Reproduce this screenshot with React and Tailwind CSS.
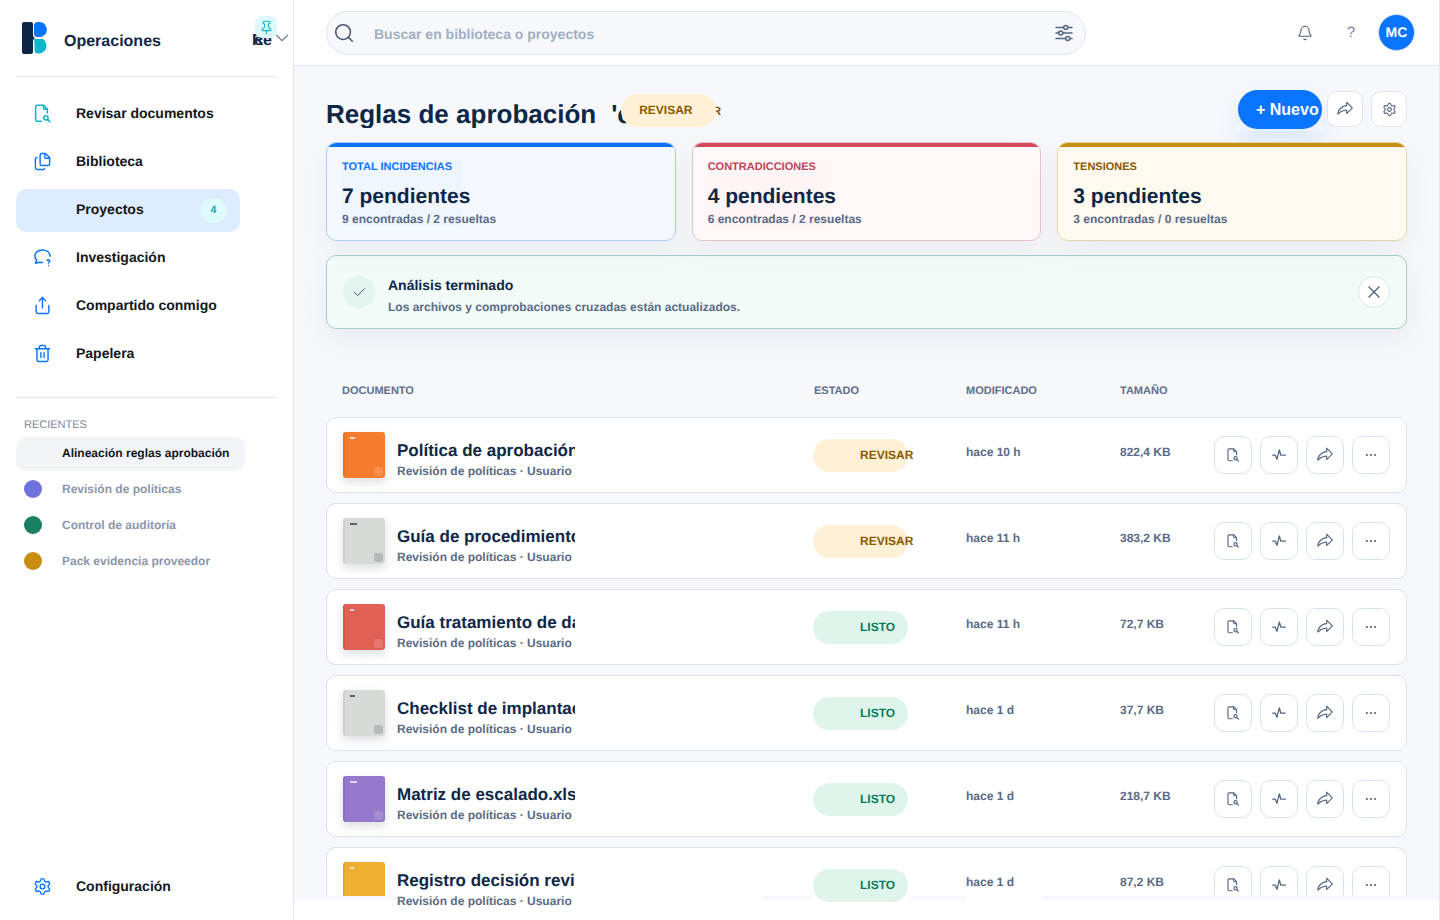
import { Bell, Check, ChevronDown, Ellipsis, Files, Pin, Search, Settings, Share, Trash2, X } from "lucide-react";
import { PiShareFat } from "react-icons/pi";

const ink = "text-[#0f2747]";

const Logo = () => (
  <svg width="25" height="32" viewBox="0 0 25 32" className="shrink-0">
    <path d="M2 0h7a2 2 0 0 1 2 2v11c0 1.500 1 2.500 2 3-1 .5-2 1.500-2 3v11a2 2 0 0 1-2 2H2a2 2 0 0 1-2-2V2a2 2 0 0 1 2-2z" fill="#0c2548" />
    <path d="M12 4a4 4 0 0 1 4-4h1a7.500 7.500 0 0 1 4 14c-.5.500-1 .700-1.500.900H15c-2 0-3-1.500-3-3.500z" fill="#0a74ff" />
    <path d="M12.500 17h8.500c2 1.500 3.500 4 3.500 7a7.500 7.500 0 0 1-7.500 7.500h-1a3.500 3.500 0 0 1-3.500-3.500v-6c0-2-.5-4-.5-5z" fill="#0fb5cb" />
  </svg>
);

const DocSearch = ({ className, width = 1.600 }) => (
  <svg viewBox="0 0 20 20" fill="none" stroke="currentColor" strokeWidth={width} strokeLinecap="round" strokeLinejoin="round" className={className}>
    <path d="M9 18.200H4.500a1.700 1.700 0 0 1-1.700-1.700V3a1.700 1.700 0 0 1 1.700-1.700h6.700l3.900 4v4.200" />
    <path d="M11 1.500v2.700a1.200 1.200 0 0 0 1.200 1.200h2.800" />
    <circle cx="13.600" cy="14.600" r="2.300" />
    <path d="M15.400 16.400l2.500 2.300" />
  </svg>
);

const ChatHelp = ({ className }) => (
  <svg viewBox="0 0 20 20" fill="none" stroke="currentColor" strokeWidth="1.600" strokeLinecap="round" strokeLinejoin="round" className={className}>
    <path d="M18 8.500C17.600 4.500 14.300 2 10 2 5.400 2 2 4.800 2 8.500c0 1.700.7 3.200 1.900 4.400L2.500 16l4.200-1.100c1 .3 2 .4 3.300.4" />
    <path d="M15 13.200c.3-1 2.700-1 2.700.5 0 1-1.300 1.100-1.300 2" />
    <path d="M16.400 18.300v.1" />
  </svg>
);

const Pulse = () => (
  <svg width="16" height="16" viewBox="0 0 14 14" fill="none" stroke="#55657f" strokeWidth="1.100" strokeLinecap="round" strokeLinejoin="round">
    <path d="M1.500 7.200h2.300l1.400 3.600L7.300 2.500l1.300 4.700h3.900" />
  </svg>
);

const Sliders = () => (
  <svg width="20" height="20" viewBox="0 0 20 20" fill="none" stroke="#55657f" strokeWidth="1.500" strokeLinecap="round">
    <path d="M2 4.500h7.500M14 4.500h4M2 10h2.500M9 10h9M2 15.500h9.500M16 15.500h2" />
    <circle cx="11.700" cy="4.500" r="2" />
    <circle cx="6.700" cy="10" r="2" />
    <circle cx="13.700" cy="15.500" r="2" />
  </svg>
);

const navItems = [
  { label: "Revisar documentos", icon: <DocSearch className="w-[19px] h-[19px] text-[#0fb5cb]" /> },
  { label: "Biblioteca", icon: <Files size={19} strokeWidth={1.8} className="text-[#0a74ff]" /> },
  { label: "Proyectos", active: true, badge: "4" },
  { label: "Investigación", icon: <ChatHelp className="w-[19px] h-[19px] text-[#0a74ff]" /> },
  { label: "Compartido conmigo", icon: <Share size={19} strokeWidth={1.8} className="text-[#0a74ff]" /> },
  { label: "Papelera", icon: <Trash2 size={19} strokeWidth={1.8} className="text-[#0a74ff]" /> },
];

const recents = [
  { label: "Revisión de políticas", dot: "bg-[#6f72dc]" },
  { label: "Control de auditoría", dot: "bg-[#1a8063]" },
  { label: "Pack evidencia proveedor", dot: "bg-[#c98d12]" },
];

const stats = [
  { label: "Total incidencias", value: "7 pendientes", sub: "9 encontradas / 2 resueltas", box: "border-[#a9cdf5] bg-[#f5f9ff]", bar: "bg-[#0a74ff]", tint: "bg-[#eff6ff]", color: "text-[#0a74ff]" },
  { label: "Contradicciones", value: "4 pendientes", sub: "6 encontradas / 2 resueltas", box: "border-[#e6c3cb] bg-[#fff8f9]", bar: "bg-[#d2495c]", tint: "bg-[#fff4f6]", color: "text-[#c0455a]" },
  { label: "Tensiones", value: "3 pendientes", sub: "3 encontradas / 0 resueltas", box: "border-[#e3d5ac] bg-[#fffaf0]", bar: "bg-[#c98d12]", tint: "bg-[#fffaf0]", color: "text-[#8a5a00]" },
];

const docs = [
  { name: "Política de aprobación.pdf", status: "REVISAR", when: "hace 10 h", size: "822,4 KB", thumb: "bg-[#f57c2e] border-l-[#ea7026]", tag: "bg-white/70 w-[5px]", mark: "bg-white/15" },
  { name: "Guía de procedimientos.docx", status: "REVISAR", when: "hace 11 h", size: "383,2 KB", thumb: "bg-[#d8dad8] border-l-[#cdd0ce]", tag: "bg-[#5a6270] w-[7px]", mark: "bg-[#b6babc]" },
  { name: "Guía tratamiento de datos.pdf", status: "LISTO", when: "hace 11 h", size: "72,7 KB", thumb: "bg-[#e06055] border-l-[#d4564c]", tag: "bg-white/70 w-[4px]", mark: "bg-white/15" },
  { name: "Checklist de implantación.docx", status: "LISTO", when: "hace 1 d", size: "37,7 KB", thumb: "bg-[#d8dad8] border-l-[#cdd0ce]", tag: "bg-[#5a6270] w-[5px]", mark: "bg-[#b6babc]" },
  { name: "Matriz de escalado.xlsx", status: "LISTO", when: "hace 1 d", size: "218,7 KB", thumb: "bg-[#9579cc] border-l-[#8a6ec3]", tag: "bg-white/70 w-[7px]", mark: "bg-white/15" },
  { name: "Registro decisión revisión.pdf", status: "LISTO", when: "hace 1 d", size: "87,2 KB", thumb: "bg-[#eeb030] border-l-[#e3a528]", tag: "bg-white/70 w-[4px]", mark: "bg-white/15", cut: true },
];

const Sidebar = () => (
  <aside className="w-[294px] shrink-0 border-r border-[#e3e7ef] bg-white px-4 flex flex-col h-[920px]">
    <div className="h-[77px] shrink-0 border-b border-[#e3e6ee] w-[261px] flex items-start pt-[22px] relative">
      <div className="ml-[6px]"><Logo /></div>
      <span className={`ml-[17px] mt-[8px] text-[16px] font-semibold ${ink}`}>Operaciones</span>
      <span className={`absolute left-[236px] top-[32px] text-[16px] leading-[18px] font-bold ${ink}`}>R</span>
      <span className={`absolute left-[238px] top-[32px] text-[16px] leading-[18px] font-bold ${ink}`}>ce</span>
      <span className="absolute left-[239px] top-[16px] w-[22px] h-[22px] rounded-[7px] bg-[#dffafc] flex items-center justify-center">
        <Pin size={15} strokeWidth={1.7} className="text-[#0fb5cb]" />
      </span>
      <ChevronDown size={22} strokeWidth={1.2} className="absolute left-[255px] top-[27px] text-[#6b7a90]" />
    </div>
    <nav className="pt-[16px] flex flex-col gap-[5px] w-[224px]">
      {navItems.map((item) => (
        <div key={item.label} className={`h-[43px] rounded-[10px] flex items-center text-[14px] font-semibold text-[#14171c] ${item.active ? "bg-[#ddecff]" : ""}`}>
          <span className="w-[60px] pl-[17px] shrink-0 flex items-center -mt-[3px]">{item.icon}</span>
          <span className="flex-1 -mt-[3px]">{item.label}</span>
          {item.badge && (
            <span className="w-[27px] h-[25px] mr-[13px] rounded-full bg-[#dffafb] flex items-center justify-center text-[10.500px] font-bold text-[#0fa5bb]">{item.badge}</span>
          )}
        </div>
      ))}
    </nav>
    <div className="mt-[21px] w-[261px] border-t border-[#e3e6ee] pt-[20px]">
      <div className="pl-[8px] text-[11px] font-medium text-[#7a869a] leading-[14px]">RECIENTES</div>
      <div className="mt-[5px] w-[229px] h-[34px] rounded-[10px] bg-[#f3f4f8] pl-[46px] pb-[2px] flex items-center text-[12px] font-semibold text-[#14171c]">Alineación reglas aprobación</div>
      <div className="flex flex-col">
        {recents.map((r) => (
          <div key={r.label} className="h-[36px] pl-[8px] flex items-center gap-[20px] text-[12px] font-semibold text-[#8c96a9]">
            <span className={`w-[18px] h-[18px] rounded-full shrink-0 ${r.dot}`} />
            {r.label}
          </div>
        ))}
      </div>
    </div>
    <div className="mt-auto mb-[12px] h-[44px] flex items-center text-[14px] font-semibold text-[#14171c]">
      <span className="w-[60px] pl-[17px] shrink-0"><Settings size={19} strokeWidth={1.8} className="text-[#0a74ff]" /></span>
      Configuración
    </div>
  </aside>
);

const Topbar = () => (
  <header className="h-[66px] shrink-0 bg-white border-b border-[#dfe4ee] px-8 flex items-center">
    <div className="w-[760px] h-[44px] rounded-full bg-[#f6f8fc] border border-[#dfe5f0] flex items-center pl-[6px] pr-[11px]">
      <Search size={22} strokeWidth={1.7} className="text-[#475569]" />
      <span className="ml-[19px] mt-[3px] text-[14px] font-semibold text-[#a3afc2] flex-1">Buscar en biblioteca o proyectos</span>
      <Sliders />
    </div>
    <div className="ml-auto flex items-center mr-[-8px]">
      <Bell size={16} strokeWidth={1.6} className="text-[#4b5a70]" />
      <span className="ml-[34px] mt-[2px] text-[15px] text-[#7a869a]">?</span>
      <span className="ml-[23px] w-[37px] h-[37px] rounded-full bg-[#0a74ff] border border-[#dfe5f0] flex items-center justify-center text-[14px] font-bold text-white">MC</span>
    </div>
  </header>
);

const TitleRow = () => (
  <div className="flex items-start">
    <h1 className={`h-[38px] overflow-hidden text-[26px] font-bold leading-[49px] whitespace-nowrap ${ink}`}>
      Reglas de aprobación<span className="ml-[15px]">'c</span>
    </h1>
    <div className="relative ml-[-11px] pl-[47px] h-[33px] mt-[4px] w-[101px] flex items-center text-[12px] font-semibold text-[#8a5a00]">
      REVISAR
      <span className="absolute left-0 top-0 w-[95px] h-[33px] rounded-full bg-[#fff0d6] pr-[5px] pb-[1px] flex items-center justify-center">REVISAR</span>
    </div>
    <div className="ml-auto flex items-start">
      <div className="w-[87px] h-[41px] pl-[2px] bg-gradient-to-b from-[#f6f8fc] from-70% to-white">
        <button className="h-[39px] w-[84px] rounded-full bg-[#0a74ff] pl-[18px] text-left text-[16px] font-bold text-white whitespace-nowrap shadow-[0_12px_24px_rgba(10,116,255,0.12)]">+ Nuevo</button>
      </div>
      <button className="ml-[4px] mt-[1px] w-[36px] h-[36px] rounded-[10px] bg-white border border-[#dfe5f0] flex items-center justify-center"><PiShareFat size={18} className="text-[#55657f]" /></button>
      <button className="ml-[8px] mt-[1px] w-[36px] h-[36px] rounded-[10px] bg-white border border-[#dfe5f0] flex items-center justify-center"><Settings size={15} strokeWidth={1.7} className="text-[#55657f]" /></button>
    </div>
  </div>
);

const StatCard = ({ s }) => (
  <div className={`h-[99px] rounded-[10px] border overflow-hidden shadow-[0_10px_30px_rgba(15,23,42,0.05)] ${s.box}`}>
    <div className={`h-[4px] ${s.bar}`} />
    <div className={`ml-[15px] mt-[13px] w-[120px] h-[66px] ${s.tint}`}>
      <div className={`text-[11px] font-semibold uppercase whitespace-nowrap leading-[14px] ${s.color}`}>{s.label}</div>
      <div className={`mt-[10px] text-[21px] font-bold leading-[26px] whitespace-nowrap ${ink}`}>{s.value}</div>
      <div className="mt-[1px] text-[12px] font-semibold leading-[16px] whitespace-nowrap text-[#5a6b85]">{s.sub}</div>
    </div>
  </div>
);

const Notice = () => (
  <div className="mt-[14px] h-[74px] rounded-[10px] border border-[#a5cfcf] bg-[#f2fbf8] pl-[16px] pr-[16px] flex items-center shadow-[0_10px_30px_rgba(15,23,42,0.06)]">
    <span className="w-[32px] h-[32px] rounded-full bg-[#e4f5ef] flex items-center justify-center shrink-0"><Check size={15} strokeWidth={1.6} className="text-[#475569]" /></span>
    <div className="ml-[13px] mt-[7px]">
      <div className={`text-[14px] font-bold leading-[18px] ${ink}`}>Análisis terminado</div>
      <div className="mt-[5px] text-[12px] font-semibold leading-[16px] text-[#5a6b85]">Los archivos y comprobaciones cruzadas están actualizados.</div>
    </div>
    <span className="ml-auto w-[32px] h-[32px] rounded-full bg-white border border-[#dfe5f0] flex items-center justify-center"><X size={20} strokeWidth={1.6} className="text-[#55657f]" /></span>
  </div>
);

const ActionButton = ({ children }) => (
  <span className="w-[38px] h-[38px] shrink-0 rounded-[10px] bg-white border border-[#d9e2ef] flex items-center justify-center">{children}</span>
);

const DocRow = ({ d }) => (
  <div className={`bg-white border-[#d9e2ef] ${d.cut ? "h-[49px] rounded-t-[10px] border-x border-t" : "h-[76px] rounded-[10px] border"} pl-[16px] pr-[16px] grid grid-cols-[470px_153px_154px_94px_176px] items-start`}>
    <div className="flex items-start">
      <div className={`mt-[14px] w-[42px] shrink-0 ${d.cut ? "h-[34px] overflow-hidden" : "h-[46px]"}`}>
        <div className={`relative h-[46px] rounded-[3px] border-l-[2px] shadow-[0_4px_10px_rgba(15,23,42,0.14)] ${d.thumb}`}>
          <span className={`absolute left-[5px] top-[5px] h-[2px] ${d.tag}`} />
          <span className={`absolute right-[2px] bottom-[2px] w-[9px] h-[9px] rounded-[2px] ${d.mark}`} />
        </div>
      </div>
      <div className="ml-[12px] mt-[22px] w-[178px]">
        <div className={`overflow-hidden whitespace-nowrap text-[17px] font-bold leading-[22px] ${ink}`}>{d.name}</div>
        <div className="mt-[1px] whitespace-nowrap text-[12px] font-semibold leading-[16px] text-[#5a6b85]">Revisión de políticas · Usuario</div>
      </div>
    </div>
    <div className={`mt-[21px] w-[95px] h-[33px] rounded-full pl-[47px] pb-[2px] flex items-center whitespace-nowrap text-[12px] font-bold ${d.status === "LISTO" ? "bg-[#dff5ec] text-[#0f7a57]" : "bg-[#fff0d6] text-[#8a5a00]"}`}>{d.status}</div>
    <div className="mt-[26px] text-[12px] font-semibold leading-[16px] text-[#5a6b85]">{d.when}</div>
    <div className="mt-[26px] text-[12px] font-semibold leading-[16px] text-[#5a6b85]">{d.size}</div>
    <div className={`mt-[18px] flex gap-[8px] ${d.cut ? "h-[30px] overflow-hidden" : ""}`}>
      <ActionButton><DocSearch className="w-[14px] h-[14px] text-[#55657f]" width={1.600} /></ActionButton>
      <ActionButton><Pulse /></ActionButton>
      <ActionButton><PiShareFat size={18} className="text-[#55657f]" /></ActionButton>
      <ActionButton><Ellipsis size={14} strokeWidth={1.800} className="text-[#55657f]" /></ActionButton>
    </div>
  </div>
);

export default function App() {
  return (
    <div className="w-[1440px] h-[920px] overflow-hidden flex bg-white font-['Liberation_Sans',sans-serif] [text-rendering:geometricPrecision]">
      <Sidebar />
      <div className="flex-1 flex flex-col border-r border-[#e3e7ef]">
        <Topbar />
        <main className="h-[830px] shrink-0 bg-[#f6f8fc] px-8 pt-[24px]">
          <TitleRow />
          <div className="mt-[11px] grid grid-cols-3 gap-[16px]">
            {stats.map((s) => <StatCard key={s.label} s={s} />)}
          </div>
          <Notice />
          <div className="mt-[54px] h-[16px] pl-[16px] grid grid-cols-[472px_152px_154px_94px] text-[11px] font-semibold uppercase leading-[16px] text-[#5f6f86]">
            <span>Documento</span>
            <span>Estado</span>
            <span>Modificado</span>
            <span>Tamaño</span>
          </div>
          <div className="mt-[18px] flex flex-col gap-[10px]">
            {docs.map((d) => <DocRow key={d.name} d={d} />)}
          </div>
        </main>
        <div className="h-[4px] shrink-0 flex">
          <span className="w-[103px] bg-[#f6f8fc]" />
          <span className="w-[364px]" />
          <span className="w-[51px] bg-[#f6f8fc]" />
          <span className="w-[97px]" />
          <span className="w-[57px] bg-[#f6f8fc]" />
          <span className="w-[75px]" />
          <span className="flex-1 bg-[#f6f8fc]" />
        </div>
      </div>
    </div>
  );
}
